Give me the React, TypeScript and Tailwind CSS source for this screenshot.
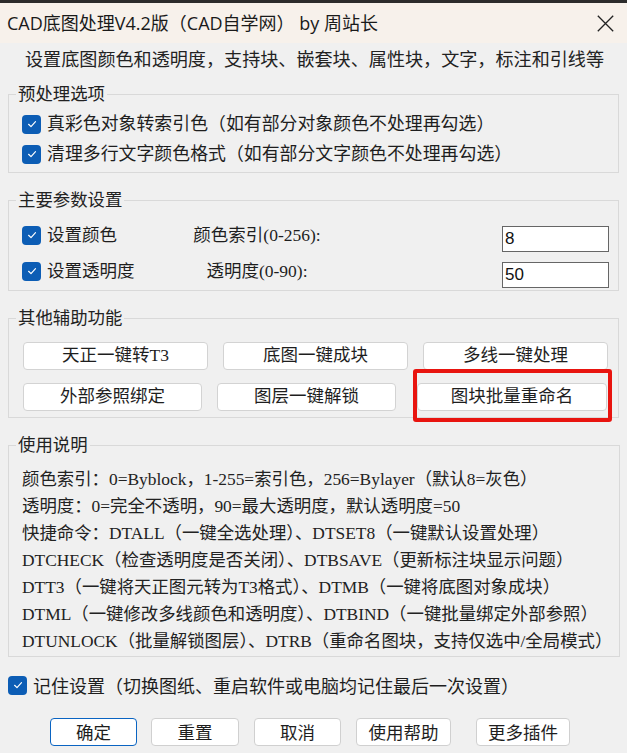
import React from "react";

const serif = "font-['Liberation_Serif','Noto_Sans_CJK_SC',serif]";
const sans = "font-['Noto_Sans_CJK_SC',sans-serif]";

const CheckBox: React.FC = () => (
  <span className="flex h-[19px] w-[19px] shrink-0 items-center justify-center rounded-[4px] bg-[#0c5db5]">
    <svg width="12" height="12" viewBox="0 0 12 12">
      <path
        d="M2.6 6.3 L5 8.6 L9.5 3.7"
        fill="none"
        stroke="white"
        strokeWidth="1.2"
        strokeLinecap="round"
        strokeLinejoin="round"
      />
    </svg>
  </span>
);

const Group: React.FC<{ title: string; className?: string; children: React.ReactNode }> = ({
  title,
  className = "",
  children,
}) => (
  <fieldset className={`mx-[8px] border border-[#d9d9d9] px-[7px] ${className}`}>
    <legend className={`px-[2px] text-[17.4px] leading-[24px] text-[#222] ${serif}`}>{title}</legend>
    {children}
  </fieldset>
);

const FnButton: React.FC<{ label: string; w: string; className?: string }> = ({ label, w, className = "" }) => (
  <button
    className={`h-[28px] ${w} shrink-0 rounded-[4px] border border-[#d3d3d3] bg-white text-[17.5px] leading-none text-[#1e1e1e] ${serif} ${className}`}
  >
    {label}
  </button>
);

const notes = [
  "颜色索引：0=Byblock，1-255=索引色，256=Bylayer（默认8=灰色）",
  "透明度：0=完全不透明，90=最大透明度，默认透明度=50",
  "快捷命令：DTALL（一键全选处理）、DTSET8（一键默认设置处理）",
  "DTCHECK（检查透明度是否关闭）、DTBSAVE（更新标注块显示问题）",
  "DTT3（一键将天正图元转为T3格式）、DTMB（一键将底图对象成块）",
  "DTML（一键修改多线颜色和透明度）、DTBIND（一键批量绑定外部参照）",
  "DTUNLOCK（批量解锁图层）、DTRB（重命名图块，支持仅选中/全局模式）",
];

const footerButtons = [
  { label: "确定", cls: "ml-[50px] w-[87px] border-[#0a64c2]" },
  { label: "重置", cls: "ml-[14px] w-[88px] border-[#d0d0d0]" },
  { label: "取消", cls: "ml-[15px] w-[87px] border-[#d0d0d0]" },
  { label: "使用帮助", cls: "ml-[15px] w-[95px] border-[#d0d0d0]" },
  { label: "更多插件", cls: "ml-[25px] w-[94px] border-[#d0d0d0]" },
];

export default function App() {
  return (
    <div className="h-[753px] w-[627px] overflow-hidden bg-[#f0f0f0] text-[#1e1e1e]">
      {/* window edge */}
      <div className="h-[3px] bg-[#2c2c2c]" />

      {/* Title bar */}
      <div className="flex h-[40px] items-center justify-between bg-[#f7f1eb] pl-[7px] pr-[13px]">
        <span className={`text-[18px] leading-none text-[#1a1a1a] font-['Open_Sans','Noto_Sans_CJK_SC',sans-serif]`}>
          CAD底图处理V4.2版（CAD自学网） by 周站长
        </span>
        <svg width="17" height="17" viewBox="0 0 17 17" className="mt-[1px]">
          <path d="M0.8 0.8 L16.2 16.2 M16.2 0.8 L0.8 16.2" stroke="#222" strokeWidth="1.3" />
        </svg>
      </div>

      <p className={`mt-[4px] pl-[25px] text-[18.1px] leading-[26px] text-[#222] ${serif}`}>
        设置底图颜色和透明度，支持块、嵌套块、属性块，文字，标注和引线等
      </p>

      {/* 预处理选项 */}
      <Group title="预处理选项" className="mt-[9px] pb-[3px]">
        <div className={`pl-[6px] pt-[3px] text-[17.9px] ${serif}`}>
          <div className="flex h-[30px] items-center gap-[6px]">
            <CheckBox />
            <span>真彩色对象转索引色（如有部分对象颜色不处理再勾选）</span>
          </div>
          <div className="flex h-[30px] items-center gap-[6px]">
            <CheckBox />
            <span>清理多行文字颜色格式（如有部分文字颜色不处理再勾选）</span>
          </div>
        </div>
      </Group>

      {/* 主要参数设置 */}
      <Group title="主要参数设置" className="mt-[15px] pb-[1px]">
        <div
          className={`grid grid-cols-[150px_170px_1fr_107px] pl-[6px] pr-[2px] pt-[5px] text-[17.5px] ${serif}`}
        >
          <div className="flex h-[36px] items-center gap-[6px]">
            <CheckBox />
            <span>设置颜色</span>
          </div>
          <div className="flex h-[36px] items-center justify-center">颜色索引(0-256):</div>
          <div />
          <input
            readOnly
            value="8"
            className="mb-[1px] h-[26px] self-end border-[1.5px] border-[#666] bg-white pl-[2px] font-['Liberation_Sans',sans-serif] text-[17px] text-[#111] outline-none"
          />

          <div className="flex h-[36px] items-center gap-[6px]">
            <CheckBox />
            <span>设置透明度</span>
          </div>
          <div className="flex h-[36px] items-center justify-center">透明度(0-90):</div>
          <div />
          <input
            readOnly
            value="50"
            className="mb-[1px] h-[26px] self-end border-[1.5px] border-[#666] bg-white pl-[2px] font-['Liberation_Sans',sans-serif] text-[17px] text-[#111] outline-none"
          />
        </div>
      </Group>

      {/* 其他辅助功能 */}
      <Group title="其他辅助功能" className="mt-[15px] pb-[6px]">
        <div className="flex flex-col gap-[13px] pl-[7px] pt-[12px]">
          <div className="flex gap-[15px]">
            <FnButton label="天正一键转T3" w="w-[185px]" />
            <FnButton label="底图一键成块" w="w-[185px]" />
            <FnButton label="多线一键处理" w="w-[185px]" />
          </div>
          <div className="flex">
            <FnButton label="外部参照绑定" w="w-[179px]" />
            <FnButton label="图层一键解锁" w="w-[179px]" className="ml-[15px]" />
            <div className="relative ml-[21px]">
              <FnButton label="图块批量重命名" w="w-[190px]" />
              {/* red highlight annotation */}
              <div className="pointer-events-none absolute -bottom-[11px] -left-[4px] -right-[5px] -top-[14px] rounded-[3px] border-[4px] border-[#e8140f]" />
            </div>
          </div>
        </div>
      </Group>

      {/* 使用说明 */}
      <Group title="使用说明" className="mt-[15px] pb-[1px]">
        <div className={`pl-[6px] pt-[9px] text-[17.4px] leading-[27px] text-[#222] ${serif}`}>
          {notes.map((line) => (
            <div key={line} className="whitespace-nowrap">
              {line}
            </div>
          ))}
        </div>
      </Group>

      {/* remember */}
      <div className="mt-[16px] flex h-[24px] items-center gap-[6px] pl-[8px]">
        <CheckBox />
        <span className={`text-[18px] text-[#1e1e1e] ${sans}`}>
          记住设置（切换图纸、重启软件或电脑均记住最后一次设置）
        </span>
      </div>

      {/* footer buttons */}
      <div className="mt-[21px] flex">
        {footerButtons.map((b) => (
          <button
            key={b.label}
            className={`h-[28px] shrink-0 rounded-[4px] border bg-white text-[17.5px] leading-none text-[#1e1e1e] ${sans} ${b.cls}`}
          >
            {b.label}
          </button>
        ))}
      </div>
    </div>
  );
}
